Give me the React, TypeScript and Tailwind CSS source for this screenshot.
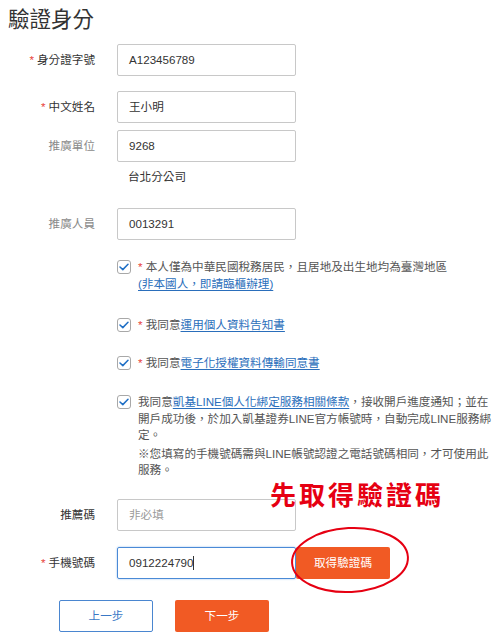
import React from "react";

const font = "font-['Liberation_Sans','Noto_Sans_CJK_TC',sans-serif]";

function Label({ text, required, muted }: { text: string; required?: boolean; muted?: boolean }) {
  return (
    <div className={`w-[95px] text-right text-[11.6px] ${muted ? "text-[#8a8a8a]" : "text-[#333]"}`}>
      {required && <span className="text-[#e8443a] mr-[3px]">*</span>}
      {text}
    </div>
  );
}

function Field({ label, value, required, muted, placeholder }: { label: string; value?: string; required?: boolean; muted?: boolean; placeholder?: string }) {
  return (
    <div className="flex items-center">
      <Label text={label} required={required} muted={muted} />
      <div className="ml-[22px] w-[179px] h-[32px] border border-[#c8c8c8] rounded-[2px] flex items-center pl-[11px] text-[11.6px]">
        {value ? <span className="text-[#333]">{value}</span> : <span className="text-[#9a9a9a]">{placeholder}</span>}
      </div>
    </div>
  );
}

function Check() {
  return (
    <div className="w-[14px] h-[14px] shrink-0 border border-[#a8a8a8] rounded-[3px] flex items-center justify-center bg-white">
      <svg width="10" height="8" viewBox="0 0 10 8">
        <polyline points="1,4 3.8,6.6 9,1.3" fill="none" stroke="#1f6fc5" strokeWidth="1.5" strokeLinecap="round" strokeLinejoin="round" />
      </svg>
    </div>
  );
}

const link = "text-[#2a6ebb] underline underline-offset-2";

export default function App() {
  return (
    <div className={`relative w-[500px] h-[634px] bg-white overflow-hidden ${font}`}>
      <h1 className="pl-[8px] pt-[5px] text-[21.5px] leading-[30px] text-[#333]">驗證身分</h1>

      <div className="mt-[9px]">
        <Field label="身分證字號" value="A123456789" required />
      </div>
      <div className="mt-[15px]">
        <Field label="中文姓名" value="王小明" required />
      </div>
      <div className="mt-[7px]">
        <Field label="推廣單位" value="9268" muted />
      </div>
      <div className="mt-[6px] pl-[128px] h-[18px] leading-[18px] text-[11.6px] text-[#333]">台北分公司</div>
      <div className="mt-[22px]">
        <Field label="推廣人員" value="0013291" muted />
      </div>

      <div className="ml-[117px] text-[11.6px] leading-[17px] text-[#555]">
        <div className="mt-[18px] flex gap-[7px]">
          <div className="pt-[2px]"><Check /></div>
          <div className="whitespace-nowrap">
            <span className="text-[#e8443a]">*</span> 本人僅為中華民國稅務居民，且居地及出生地均為臺灣地區
            <br />
            <span className={link}>(非本國人，即請臨櫃辦理)</span>
          </div>
        </div>
        <div className="mt-[24px] flex gap-[7px]">
          <div className="pt-[2px]"><Check /></div>
          <div>
            <span className="text-[#e8443a]">*</span> 我同意<span className={link}>運用個人資料告知書</span>
          </div>
        </div>
        <div className="mt-[21px] flex gap-[7px]">
          <div className="pt-[2px]"><Check /></div>
          <div>
            <span className="text-[#e8443a]">*</span> 我同意<span className={link}>電子化授權資料傳輸同意書</span>
          </div>
        </div>
        <div className="mt-[23px] flex gap-[7px] leading-[16.5px]">
          <div className="pt-[1px]"><Check /></div>
          <div className="whitespace-nowrap">
            <p>
              我同意<span className={link}>凱基LINE個人化綁定服務相關條款</span>，接收開戶進度通知；並在
              <br />
              開戶成功後，於加入凱基證券LINE官方帳號時，自動完成LINE服務綁
              <br />
              定。
            </p>
            <p className="mt-[2px]">
              ※您填寫的手機號碼需與LINE帳號認證之電話號碼相同，才可使用此
              <br />
              服務。
            </p>
          </div>
        </div>
      </div>

      <div className="mt-[20px]">
        <Field label="推薦碼" placeholder="非必填" />
      </div>

      <div className="mt-[16px] flex items-center">
        <Label text="手機號碼" required />
        <div className="ml-[22px] w-[179px] h-[32px] border border-[#4a8ad6] rounded-[2px] shadow-[0_0_2px_#8fb8ea] flex items-center pl-[11px] text-[11.6px] text-[#333]">
          0912224790<span className="w-px h-[14px] bg-[#333]" />
        </div>
        <button className="w-[94px] h-[32px] bg-[#f15a24] rounded-[2px] text-white text-[11.6px]">取得驗證碼</button>
      </div>

      <div className="mt-[21px] ml-[59px] flex gap-[22px]">
        <button className="w-[94px] h-[32px] border border-[#4a86d0] rounded-[2px] text-[#3a78c6] text-[11.6px] bg-white">上一步</button>
        <button className="w-[94px] h-[32px] bg-[#f15a24] rounded-[2px] text-white text-[11.6px]">下一步</button>
      </div>

      <div className="absolute left-[270px] top-[483px] text-[26px] leading-[26px] font-bold tracking-[3px] text-[#e60012]">
        先取得驗證碼
      </div>
      <svg className="absolute left-[290px] top-[525px]" width="122" height="70" viewBox="0 0 122 70">
        <ellipse cx="60" cy="35" rx="58" ry="32" fill="none" stroke="#e60012" strokeWidth="2" transform="rotate(-3 60 35)" />
      </svg>
    </div>
  );
}
